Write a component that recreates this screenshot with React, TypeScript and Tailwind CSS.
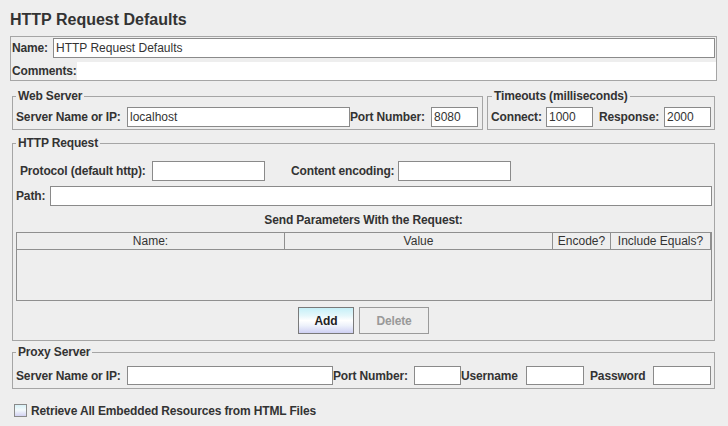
import React from "react";

function Field({ className, value }: { className: string; value?: string }) {
  return (
    <div
      className={`${className} shrink-0 bg-white border border-[#8a8a8a] pl-[2px] flex items-center font-normal tracking-normal text-[12px] text-[#333333] leading-[14px] whitespace-nowrap overflow-hidden`}
    >
      {value}
    </div>
  );
}

function Label({ className, children }: { className: string; children: React.ReactNode }) {
  return <span className={`${className} shrink-0 font-bold tracking-[-0.15px] whitespace-nowrap`}>{children}</span>;
}

export default function App() {
  return (
    <div className="w-[728px] h-[426px] bg-[#eeeeee] text-[#333333] font-['Liberation_Sans',Arial,sans-serif] text-[12px] leading-[14px] overflow-hidden">
      <div className="pt-[10px] pl-[10px] text-[16px] leading-[20px] font-bold">HTTP Request Defaults</div>

      {/* Name / Comments */}
      <div className="mt-[6px] ml-[10px] w-[707px] h-[45px] border border-[#a5a5a5] flex flex-col">
        <div className="flex items-center mt-[1px] pr-[1px]">
          <Label className="w-[42px] pl-[1px]">Name:</Label>
          <Field className="flex-1 h-[20px]" value="HTTP Request Defaults" />
        </div>
        <div className="flex items-center mt-[4px] h-[18px]">
          <Label className="w-[66px] pl-[1px]">Comments:</Label>
          <div className="flex-1 h-full bg-white" />
        </div>
      </div>

      {/* Web Server + Timeouts */}
      <div className="mt-[8px] ml-[12px] flex gap-[4px]">
        <fieldset className="w-[471px] border border-[#a5a5a5]">
          <legend className="ml-[3px] px-[2px] font-bold tracking-[-0.15px] leading-[14px]">Web Server</legend>
          <div className="flex items-center pl-[3px] pt-[4px] pb-[2px]">
            <Label className="w-[111px]">Server Name or IP:</Label>
            <Field className="w-[223px] h-[20px]" value="localhost" />
            <Label className="w-[81px]">Port Number:</Label>
            <Field className="w-[47px] h-[20px]" value="8080" />
          </div>
        </fieldset>
        <fieldset className="w-[228px] border border-[#a5a5a5]">
          <legend className="ml-[4px] px-[2px] font-bold tracking-[-0.15px] leading-[14px]">Timeouts (milliseconds)</legend>
          <div className="flex items-center pl-[3px] pt-[4px] pb-[2px]">
            <Label className="w-[55px]">Connect:</Label>
            <Field className="w-[47px] h-[20px]" value="1000" />
            <Label className="w-[65px] ml-[6px]">Response:</Label>
            <Field className="w-[47px] h-[20px]" value="2000" />
          </div>
        </fieldset>
      </div>

      {/* HTTP Request */}
      <fieldset className="mt-[6px] ml-[12px] w-[703px] border border-[#a5a5a5]">
        <legend className="ml-[3px] px-[2px] font-bold tracking-[-0.15px] leading-[14px]">HTTP Request</legend>
        <div className="flex items-center pl-[7px] pt-[11px]">
          <Label className="w-[132px]">Protocol (default http):</Label>
          <Field className="w-[113px] h-[20px]" />
          <Label className="w-[107px] ml-[26px]">Content encoding:</Label>
          <Field className="w-[113px] h-[20px]" />
        </div>
        <div className="flex items-center pl-[3px] mt-[5px]">
          <Label className="w-[34px]">Path:</Label>
          <Field className="w-[662px] h-[20px]" />
        </div>
        <div className="mt-[7px] text-center font-bold tracking-[-0.15px]">Send Parameters With the Request:</div>
        <div className="mt-[5px] ml-[3px] w-[696px] h-[69px] border border-[#8f8f8f] flex flex-col">
          <div className="flex h-[17px] border-b border-[#8f8f8f] text-[#333333]">
            <div className="w-[268px] border-r border-[#8f8f8f] flex items-center justify-center">Name:</div>
            <div className="w-[268px] border-r border-[#8f8f8f] flex items-center justify-center">Value</div>
            <div className="w-[58px] border-r border-[#8f8f8f] flex items-center justify-center">Encode?</div>
            <div className="flex-1 border-r border-[#8f8f8f] flex items-center justify-center">Include Equals?</div>
          </div>
          <div className="flex-1 bg-[#eeeeee]" />
        </div>
        <div className="flex justify-center gap-[5px] mt-[6px] pb-[6px]">
          <button className="w-[56px] h-[27px] border border-[#7a7a7a] font-bold tracking-[-0.15px] text-[#222222] bg-[linear-gradient(to_bottom,#c6f0f8_0%,#e4f7fb_30%,#ffffff_50%,#eef2fb_70%,#cfd0f4_100%)]">
            Add
          </button>
          <button className="w-[70px] h-[27px] border border-[#9a9a9a] font-bold tracking-[-0.15px] text-[#999999] bg-[#eeeeee]">
            Delete
          </button>
        </div>
      </fieldset>

      {/* Proxy Server */}
      <fieldset className="mt-[4px] ml-[12px] w-[703px] border border-[#a5a5a5]">
        <legend className="ml-[3px] px-[2px] font-bold tracking-[-0.15px] leading-[14px]">Proxy Server</legend>
        <div className="flex items-center pl-[3px] pt-[7px] pb-[3px]">
          <Label className="w-[111px]">Server Name or IP:</Label>
          <Field className="w-[206px] h-[19px]" />
          <Label className="w-[81px]">Port Number:</Label>
          <Field className="w-[47px] h-[19px]" />
          <Label className="w-[65px]">Username</Label>
          <Field className="w-[58px] h-[19px]" />
          <Label className="w-[63px] ml-[6px]">Password</Label>
          <Field className="w-[58px] h-[19px]" />
        </div>
      </fieldset>

      <div className="mt-[15px] ml-[14px] flex items-center h-[13px]">
        <div className="w-[13px] h-[13px] border border-[#8a8a8a] bg-[linear-gradient(to_bottom,#d8f1f7,#f4fafc_45%,#d3d2f2)]" />
        <span className="ml-[4px] font-bold tracking-[-0.15px]">Retrieve All Embedded Resources from HTML Files</span>
      </div>
    </div>
  );
}
